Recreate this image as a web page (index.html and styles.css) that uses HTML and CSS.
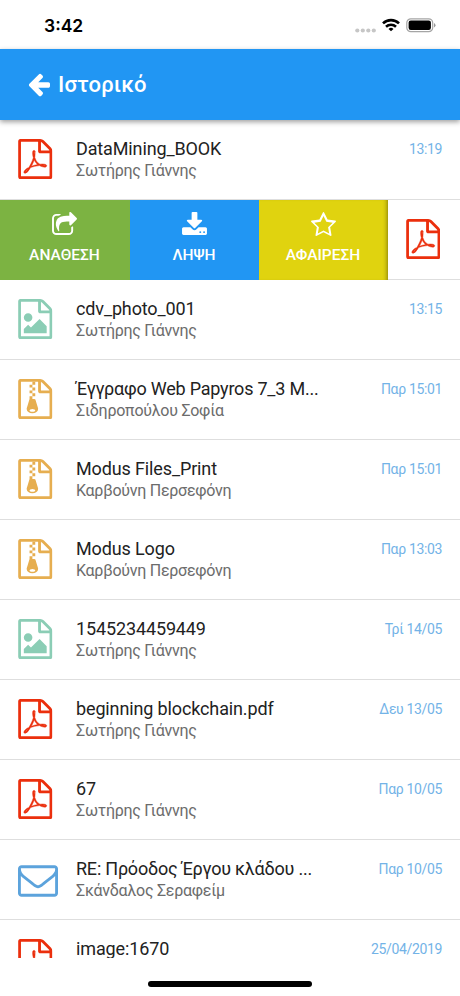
FILE: index.html
```html
<!DOCTYPE html>
<html lang="el">
<head>
<meta charset="utf-8">
<title>Ιστορικό</title>
<link rel="stylesheet" href="styles.css">
</head>
<body>
<svg width="0" height="0" class="defs">
  <symbol id="file" viewBox="0 0 1536 1792"><path d="M1468 380q28 28 48 76t20 88v1152q0 40-28 68t-68 28h-1344q-40 0-68-28t-28-68v-1600q0-40 28-68t68-28h896q40 0 88 20t76 48zM1024 136v376h376q-10-29-22-41l-313-313q-12-12-41-22zM1408 1664v-1024h-416q-40 0-68-28t-28-68v-416h-768v1536h1280z"/></symbol>
  <symbol id="pdf" viewBox="0 0 1536 1792"><use href="#file"/><path stroke="currentColor" stroke-width="20" d="M894 1071q33 26 84 56 59-7 117-7 147 0 177 49 16 22 2 52 0 1-1 2l-2 2v1q-6 38-71 38-48 0-115-20t-130-53q-221 24-392 83-153 262-242 262-15 0-28-7l-24-12q-1-1-6-5-10-10-6-36 9-40 56-91.500t132-96.500q14-9 23 6 2 2 2 4 52-85 107-197 68-136 104-262-24-82-30.500-159.500t6.500-127.500q11-40 42-40h22q23 0 35 15 18 21 9 68-2 6-4 8 1 3 1 8v30q-2 123-14 192 55 164 146 238zm-576 411q52-24 137-158-51 40-87.500 84t-49.500 74zm398-920q-15 42-2 132 1-7 7-44 0-3 7-43 1-4 4-8-1-1-1-2t-1-2q-1-22-13-36 0 1-1 2v2zm-124 661q135-54 284-81-2-1-13-9.500t-16-13.500q-76-67-127-176-27 86-83 197-30 56-45 83zm646-16q-24-24-140-24 76 28 124 28 14 0 18-1 0-1-2-3z"/></symbol>
  <symbol id="image" viewBox="0 0 1536 1792"><use href="#file"/><path d="M1280 1216v320h-1024v-192l192-192 128 128 384-384zM448 1024q-80 0-136-56t-56-136 56-136 136-56 136 56 56 136-56 136-136 56z"/></symbol>
  <symbol id="zip" viewBox="0 0 1536 1792"><use href="#file"/><path d="M512 256h128v-128h128v128h-128v128h128v128h-128v128h128v128h-128v-128h-128v-128h128v-128h-128zM781 943l107 349q8 27 8 52 0 83-72.500 137.500t-183.500 54.500-183.500-54.500-72.500-137.500q0-25 8-52 21-63 120-396v-128h128v128h79q22 0 39 13t23 34zM640 1472q53 0 90.500-19t37.500-45-37.500-45-90.500-19-90.500 19-37.500 45 37.500 45 90.500 19z"/></symbol>
  <symbol id="mail" viewBox="0 256 1792 1408"><path d="M1664 1504v-768q-32 36-69 66-268 206-426 338-51 43-83 67t-86.500 48.500-102.500 24.500h-2q-48 0-102.500-24.500t-86.500-48.500-83-67q-158-132-426-338-37-30-69-66v768q0 13 9.500 22.500t22.500 9.500h1472q13 0 22.500-9.500t9.500-22.500zM1664 453v-24.500l-.5-13-3-12.500-5.500-9-9-7.500-14-2.500h-1472q-13 0-22.500 9.500t-9.500 22.500q0 168 147 284 193 152 401 317 6 5 35 29.500t46 37.500 44.500 31.500 50.500 27.500 43 9h2q20 0 43-9t50.500-27.500 44.500-31.500 46-37.500 35-29.500q208-165 401-317 54-43 100.500-115.500t46.500-131.500zM1792 416v1088q0 66-47 113t-113 47h-1472q-66 0-113-47t-47-113v-1088q0-66 47-113t113-47h1472q66 0 113 47t47 113z"/></symbol>
</svg>
<div class="screen">
  <div class="status">
    <span class="time">3:42</span>
    <div class="indicators">
      <svg class="signal" width="21" height="5" viewBox="0 0 21 5"><circle cx="2.300" cy="2.500" r="2.100"/><circle cx="7.800" cy="2.500" r="2.100"/><circle cx="13.300" cy="2.500" r="2.100"/><circle cx="18.800" cy="2.500" r="2.100"/></svg>
      <svg class="wifi" width="18" height="14" viewBox="0 0 18 14" fill="none" stroke="#000" stroke-width="2.600"><path d="M1 5.400a11.500 11.500 0 0 1 16 0M4 8.700a7.300 7.300 0 0 1 10 0"/><path d="M9 13.300L6.500 10.900a3.700 3.700 0 0 1 5 0z" fill="#000" stroke="none"/></svg>
      <svg class="battery" width="30" height="15" viewBox="0 0 30 15"><rect x=".8" y=".8" width="25.900" height="12.900" rx="4" fill="#fff" stroke="#a5a5a5" stroke-width="1.200"/><rect x="2.600" y="2.600" width="22.300" height="9.300" rx="2.200"/><path d="M28 5q1.500 .7 1.500 2.200T28 9.500z" fill="#999"/></svg>
    </div>
  </div>
  <header class="bar">
    <svg width="22" height="24" viewBox="0 180 1536 1560"><path d="M1536 896v128q0 53-32.500 90.500t-84.500 37.500h-704l293 294q38 36 38 90t-38 90l-75 76q-37 37-90 37-52 0-91-37l-651-652q-37-37-37-90 0-52 37-91l651-650q38-38 91-38 52 0 90 38l75 74q38 38 38 91t-38 91l-293 293h704q52 0 84.500 37.500t32.500 90.500z"/></svg>
    <h1>Ιστορικό</h1>
  </header>
  <main class="list">
    <div class="row"><svg class="icon pdf"><use href="#pdf"/></svg><div class="text"><div class="name">DataMining_BOOK</div><div class="from">Σωτήρης Γιάννης</div></div><div class="date">13:19</div></div>
    <div class="row swiped">
      <div class="action assign"><svg width="25" height="23" viewBox="0 0 1664 1536"><path d="M1408 989v259q0 119-84.500 203.500t-203.500 84.500h-832q-119 0-203.500-84.500t-84.500-203.500v-832q0-119 84.500-203.500t203.500-84.500h255q13 0 22.500 9.500t9.500 22.500q0 27-26 32-77 26-133 60-10 4-16 4h-112q-66 0-113 47t-47 113v832q0 66 47 113t113 47h832q66 0 113-47t47-113v-214q0-19 18-29 28-13 54-37 16-16 35-8 21 9 21 31zm237-496l-384 384q-18 19-45 19-12 0-25-5-39-17-39-59v-192h-160q-323 0-438 131-119 137-74 473 3 23-20 34-8 2-12 2-16 0-26-13-10-14-21-31t-39.500-68.500-49.500-99.500-38.500-114-17.500-122q0-49 3.500-91t14-90 28-88 47-81.500 68.500-74 94.500-61.500 124.500-48.500 159.500-30.500 196.500-11h160v-192q0-42 39-59 13-5 25-5 26 0 45 19l384 384q19 19 19 45t-19 45z"/></svg><span>ΑΝΑΘΕΣΗ</span></div>
      <div class="action download"><svg width="25" height="23" viewBox="0 0 1664 1536"><path d="M1280 1344q0-26-19-45t-45-19-45 19-19 45 19 45 45 19 45-19 19-45zm256 0q0-26-19-45t-45-19-45 19-19 45 19 45 45 19 45-19 19-45zm128-224v320q0 40-28 68t-68 28h-1472q-40 0-68-28t-28-68v-320q0-40 28-68t68-28h465l135 136q58 56 136 56t136-56l136-136h464q40 0 68 28t28 68zm-325-569q17 41-14 70l-448 448q-18 19-45 19t-45-19l-448-448q-31-29-14-70 17-39 59-39h256v-448q0-26 19-45t45-19h256q26 0 45 19t19 45v448h256q42 0 59 39z"/></svg><span>ΛΗΨΗ</span></div>
      <div class="action remove"><svg width="25" height="24" viewBox="0 0 1664 1588"><path d="M1137 1004l306-297-422-62-189-382-189 382-422 62 306 297-73 421 378-199 377 199zM1664 615q0 22-26 48l-363 354 86 500q1 7 1 20 0 50-41 50-19 0-40-12l-449-236-449 236q-22 12-40 12-21 0-31.500-14.500t-10.500-35.500q0-6 2-20l86-500-364-354q-25-27-25-48 0-37 56-46l502-73 225-455q19-41 49-41t49 41l225 455 502 73q56 9 56 46z"/></svg><span>ΑΦΑΙΡΕΣΗ</span></div>
      <div class="peek"><svg class="icon pdf"><use href="#pdf"/></svg></div>
    </div>
    <div class="row"><svg class="icon image"><use href="#image"/></svg><div class="text"><div class="name">cdv_photo_001</div><div class="from">Σωτήρης Γιάννης</div></div><div class="date">13:15</div></div>
    <div class="row"><svg class="icon zip"><use href="#zip"/></svg><div class="text"><div class="name greek">Έγγραφο Web Papyros 7_3 M...</div><div class="from">Σιδηροπούλου Σοφία</div></div><div class="date">Παρ 15:01</div></div>
    <div class="row"><svg class="icon zip"><use href="#zip"/></svg><div class="text"><div class="name">Modus Files_Print</div><div class="from">Καρβούνη Περσεφόνη</div></div><div class="date">Παρ 15:01</div></div>
    <div class="row"><svg class="icon zip"><use href="#zip"/></svg><div class="text"><div class="name">Modus Logo</div><div class="from">Καρβούνη Περσεφόνη</div></div><div class="date">Παρ 13:03</div></div>
    <div class="row"><svg class="icon image"><use href="#image"/></svg><div class="text"><div class="name">1545234459449</div><div class="from">Σωτήρης Γιάννης</div></div><div class="date">Τρί 14/05</div></div>
    <div class="row"><svg class="icon pdf"><use href="#pdf"/></svg><div class="text"><div class="name">beginning blockchain.pdf</div><div class="from">Σωτήρης Γιάννης</div></div><div class="date">Δευ 13/05</div></div>
    <div class="row"><svg class="icon pdf"><use href="#pdf"/></svg><div class="text"><div class="name">67</div><div class="from">Σωτήρης Γιάννης</div></div><div class="date">Παρ 10/05</div></div>
    <div class="row"><svg class="icon mail"><use href="#mail"/></svg><div class="text"><div class="name greek">RE: Πρόοδος Έργου κλάδου ...</div><div class="from">Σκάνδαλος Σεραφείμ</div></div><div class="date">Παρ 10/05</div></div>
    <div class="row last"><svg class="icon pdf"><use href="#pdf"/></svg><div class="text"><div class="name">image:1670</div></div><div class="date">25/04/2019</div></div>
  </main>
  <footer class="home"><div class="pill"></div></footer>
</div>
</body>
</html>
```
FILE: styles.css
```css
* { box-sizing: border-box; }
body { margin: 0; background: #fff; font-family: Roboto, "Liberation Sans", sans-serif; }
svg { display: block; flex: none; fill: currentColor; }
.defs { position: absolute; }
.screen { width: 460px; height: 996px; display: flex; flex-direction: column; overflow: hidden; }
.status { height: 49px; flex: none; display: flex; justify-content: space-between; padding: 0 24px 0 44px; color: #000; }
.time { font: 600 17.500px/20px Inter, sans-serif; margin-top: 16px; }
.indicators { display: flex; align-items: flex-start; padding-top: 18px; }
.indicators .signal { margin-top: 10px; fill: #c6c6c6; }
.indicators .wifi { margin: 0 6px 0 6px; fill: none; }
.bar { height: 71px; flex: none; display: flex; align-items: center; gap: 8px; padding: 1px 27px 0 28px; background: #2196f3; color: #fff; box-shadow: 0 2px 5px rgba(0,0,0,.38); z-index: 1; }
.bar h1 { margin: 0; font-size: 22px; font-weight: 500; line-height: 28px; letter-spacing: .15px; }
.list { height: 838px; flex: none; overflow: hidden; }
.row { height: 80px; display: flex; align-items: flex-start; padding: 0 18px; border-bottom: 1px solid #dedede; }
.icon { width: 34.500px; height: 40px; margin: 19px 23.500px 0 0; }
.icon.pdf { color: #eb2f0d; }
.icon.image { color: #8bcdb5; }
.icon.zip { color: #e6ae50; }
.icon.mail { width: 40px; height: 32px; margin: 25px 18px 0 0; color: #5ca3dc; }
.text { flex: 1; min-width: 0; padding-top: 18px; white-space: nowrap; }
.name { font-size: 18px; line-height: 22px; color: #222; letter-spacing: -.13px; }
.name.greek { letter-spacing: -.22px; }
.from { font-size: 16px; line-height: 21px; color: #6c6c6c; letter-spacing: -.26px; }
.date { font-size: 14px; line-height: 20px; color: #73b3e7; padding-top: 19px; letter-spacing: -.35px; }
.last { border: 0; height: 38px; }
.last .icon { margin-bottom: -22px; }
.last .text { padding-top: 19px; }
.last .name { line-height: 20px; height: 19px; }
.swiped { padding: 0; align-items: stretch; }
.action { width: 129px; flex: none; height: 80px; display: flex; flex-direction: column; align-items: center; padding: 12px 1px 0 0; color: #fff; }
.action span { font-size: 15.500px; font-weight: 500; line-height: 20px; margin-top: auto; margin-bottom: 15px; }
.assign { width: 130px; background: #7cb342; }
.download { background: #2196f3; }
.remove { background: #e0d30f; box-shadow: inset -4px 0 4px -3px rgba(0,0,0,.4); }
.peek { flex: 1; padding-left: 17.500px; }
.home { flex: 1; display: flex; justify-content: center; padding-top: 23px; }
.pill { width: 164px; height: 6px; border-radius: 3px; background: #000; }
```
